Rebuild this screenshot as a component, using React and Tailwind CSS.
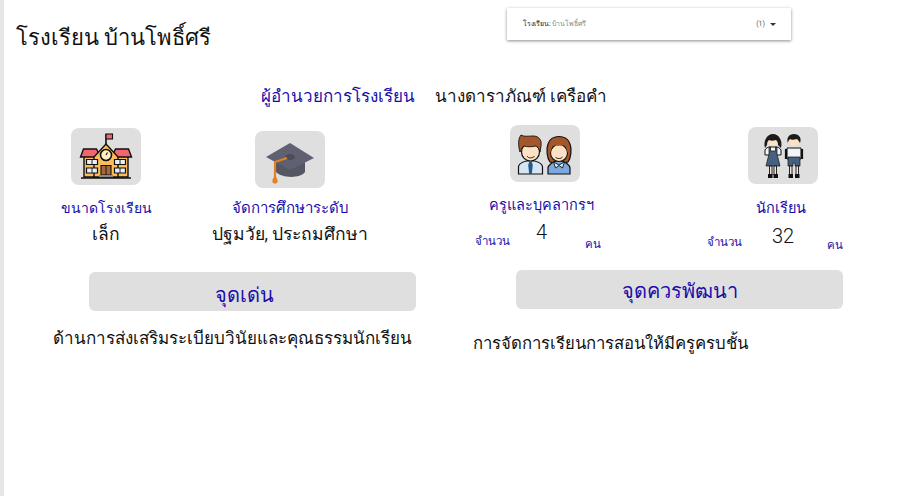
import React from 'react';

const FONT = 'font-["Roboto","Liberation_Sans","Noto_Sans",sans-serif]';

const SchoolIcon = () => (
  <svg width="54" height="50" viewBox="0 0 54 50">
    <path d="M27 13V2" stroke="#111" strokeWidth="1.6" />
    <rect x="27" y="2" width="6.500" height="5" fill="#f0656f" stroke="#111" strokeWidth="1.1" />
    <path d="M5 24h44v21H5z" fill="#fdbd5a" stroke="#111" strokeWidth="1.4" />
    <path d="M1.500 25l3-8h13l4 8zM52.500 25l-3-8h-13l-4 8z" fill="#f0656f" stroke="#111" strokeWidth="1.4" />
    <path d="M15 25L27 12l12 13v20H15z" fill="#fdbd5a" stroke="#111" strokeWidth="1.4" />
    <circle cx="27" cy="23" r="5.500" fill="#fff3c4" stroke="#111" strokeWidth="1.6" />
    <path d="M27 23l1.500-2.500" stroke="#111" strokeWidth="1.100" />
    <path d="M7.500 27.500h11v5h-11zM35.500 27.500h11v5h-11zM7.500 36h11v5h-11zM35.500 36h11v5h-11z" fill="#e6eef8" stroke="#111" strokeWidth="1.200" />
    <path d="M13 27.500v5M41 27.500v5M13 36v5M41 36v5" stroke="#111" strokeWidth="0.9" />
    <path d="M22 33.500h10v9.500H22z" fill="#a5683c" stroke="#111" strokeWidth="1.100" />
    <path d="M27 33.500v9.500" stroke="#111" strokeWidth="0.9" />
    <rect x="20" y="43" width="14" height="2.500" fill="#8a8a8a" />
    <path d="M2 46h50" stroke="#111" strokeWidth="1.500" />
  </svg>
);

const CapIcon = () => (
  <svg width="50" height="50" viewBox="0 0 50 50">
    <path d="M11 23v14c5 6 24 7 29 0V21z" fill="#545663" />
    <path d="M25 8l24 15-24 12L1 22z" fill="#5f6172" />
    <ellipse cx="25" cy="22" rx="5" ry="3" fill="#4a4c58" />
    <path d="M22 23L10 27v17" fill="none" stroke="#e67e22" strokeWidth="2.200" />
    <path d="M10 41c-2 2-3 4-2.500 6 .5 2 4.500 2 5 0 .5-2-.5-4-2.500-6z" fill="#e67e22" />
  </svg>
);

const TeachersIcon = () => (
  <svg width="56" height="42" viewBox="0 0 56 42">
    <path d="M1.500 41v-7c0-3 4-5 8-6h8c4 1 8 3 8 6v7z" fill="#d5e5f6" stroke="#111" strokeWidth="1.200" />
    <path d="M12.200 29h2.600l1 3-1 9h-2.600l-1-9z" fill="#24588f" />
    <circle cx="13.500" cy="19" r="9" fill="#fde1c4" stroke="#111" strokeWidth="1.200" />
    <path d="M3 19C1 12 1 6 4 2c3 2 7 1 12 1 6 0 9 4 8 10l-1 6c-1-3-2-5-4-6-4 1-9 1-12 0-2 1-3 4-4 6z" fill="#a4572a" stroke="#111" strokeWidth="0.9" />
    <path d="M33 29c-3-4-4-13-2-18 3-10 19-10 22 0 2 5 1 14-2 18-5 2-13 2-18 0z" fill="#a4572a" stroke="#111" strokeWidth="1.200" />
    <path d="M31 41v-6c0-3 5-6 8-7h6c3 1 8 4 8 7v6z" fill="#7aa9e0" stroke="#111" strokeWidth="1.200" />
    <circle cx="42" cy="20" r="8.500" fill="#fde1c4" stroke="#111" strokeWidth="1.100" />
    <path d="M33 20c-1-8 3-13 9-13s10 5 9 13c-1-3-2-6-3-8-5 1-9 1-12 0-1 2-2 5-3 8z" fill="#a4572a" />
    <path d="M36.500 29l5.500 3 5.500-3-2 6-3.500-2.500-3.500 2.500z" fill="#e4eefa" stroke="#111" strokeWidth="0.9" />
    <path d="M10 23c1 2.500 6 2.500 7.500 0M38.500 24c1 2 5.500 2 7 0" fill="none" stroke="#111" strokeWidth="0.9" />
  </svg>
);

const StudentsIcon = () => (
  <svg width="42" height="46" viewBox="0 0 42 46">
    <circle cx="11" cy="7" r="5.500" fill="#fde1c4" />
    <path d="M3 15C1 8 5 1 11 1s10 7 8 14l-3-3c0-3-1-4-2-5-3 1-5 1-7 0-1 1-2 2-2 5z" fill="#1b1b1b" />
    <path d="M3 17c1-2 3-3 5-3h6c2 0 4 1 5 3v5H3z" fill="#f3f4f6" stroke="#111" strokeWidth="1" />
    <path d="M7 14v7l-3 12h14l-3-12v-7h-1.500v4h-5v-4z" fill="#46607f" stroke="#111" strokeWidth="0.7" />
    <path d="M7.500 33h2.500v9H7.500zM12 33h2.500v9H12z" fill="#f3e4d8" stroke="#111" strokeWidth="0.9" />
    <rect x="6" y="41" width="4.500" height="4" fill="#111" />
    <rect x="11.500" y="41" width="4.500" height="4" fill="#111" />
    <circle cx="32" cy="7.500" r="5.500" fill="#fde1c4" />
    <path d="M26 10c-2-5 1-9 6-9s8 4 6 9c-1-2-2-3-3-4-3 1-6 1-7 0-1 1-2 2-2 4z" fill="#1b1b1b" />
    <path d="M25 15h14v11H25z" fill="#f3f4f6" stroke="#111" strokeWidth="1" />
    <path d="M24 16v10M40 16v10" stroke="#111" strokeWidth="2.200" />
    <path d="M26 24h12v9h-5v-3h-2v3h-5z" fill="#46607f" stroke="#111" strokeWidth="0.7" />
    <path d="M27.500 33H30v9h-2.500zM34 33h2.500v9H34z" fill="#f3e4d8" stroke="#111" strokeWidth="0.9" />
    <rect x="26.500" y="41" width="4.500" height="4" fill="#111" />
    <rect x="33" y="41" width="4.500" height="4" fill="#111" />
  </svg>
);

const Tile = ({ children, className = '' }) => (
  <div className={`flex h-[57px] w-[70px] items-center justify-center rounded-lg bg-[#dfdfdf] ${className}`}>{children}</div>
);

export default function App() {
  return (
    <div className={`flex h-[496px] w-[910px] flex-col overflow-hidden border-l-[4px] border-[#e6e6e6] bg-white pl-[1px] text-[#111] ${FONT}`}>
      <div className="flex h-[85px] items-start">
        <h1 className="ml-[11px] mt-[21px] w-[491px] text-[22px] leading-[34px]">โรงเรียน บ้านโพธิ์ศรี</h1>
        <div className="mt-[8px] flex h-[32px] w-[284px] items-center justify-between bg-white pl-[16px] pr-[15px] text-[7px] text-[#888] shadow-[0_1px_3px_rgba(0,0,0,0.45)]">
          <span><span className="text-[#222]">โรงเรียน:</span> บ้านโพธิ์ศรี</span>
          <span className="flex items-center gap-[5px] text-[#555]">
            (1)
            <span className="h-0 w-0 border-x-[3px] border-t-[3px] border-x-transparent border-t-[#333]" />
          </span>
        </div>
      </div>

      <div className="flex h-[23px] items-center pl-[256px] text-[17px]">
        <span className="text-[#1a0dab]">ผู้อำนวยการโรงเรียน</span>
        <span className="ml-[20px]">นางดาราภัณฑ์ เครือคำ</span>
      </div>

      <div className="flex">
        <div className="w-[450px]">
          <div className="flex pl-[16px]">
            <div className="mt-[20px] flex w-[170px] flex-col items-center">
              <Tile><SchoolIcon /></Tile>
              <div className="mt-[13px] text-[14px] leading-[20px] text-[#1a0dab]">ขนาดโรงเรียน</div>
              <div className="mt-[4px] text-[17.500px] leading-[24px]">เล็ก</div>
            </div>
            <div className="ml-[14px] mt-[23px] flex w-[170px] flex-col items-center">
              <Tile><CapIcon /></Tile>
              <div className="mt-[10px] text-[15px] leading-[20px] text-[#1a0dab]">จัดการศึกษาระดับ</div>
              <div className="mt-[4px] text-[17.500px] leading-[24px]">ปฐมวัย, ประถมศึกษา</div>
            </div>
          </div>
          <div className="ml-[84px] mt-[26px] flex h-[39px] w-[327px] items-center justify-center rounded-md bg-[#dfdfdf] pr-[16px] pt-[6px] text-[20px] text-[#1a0dab]">จุดเด่น</div>
          <div className="ml-[48px] mt-[14px] text-[17px] leading-[26px]">ด้านการส่งเสริมระเบียบวินัยและคุณธรรมนักเรียน</div>
        </div>

        <div className="w-[450px]">
          <div className="flex">
            <div className="ml-[20px] mt-[17px] flex w-[126px] flex-col">
              <Tile className="ml-[35px]"><TeachersIcon /></Tile>
              <div className="mt-[14px] ml-[14px] text-[14.500px] leading-[20px] text-[#1a0dab]">ครูและบุคลากรฯ</div>
              <div className="mt-[3px] flex items-start">
                <span className="mt-[14px] w-[36px] text-[11.500px] leading-[16px] text-[#1a0dab]">จำนวน</span>
                <span className="ml-[25px] w-[11px] text-[20px] font-light leading-[26px]">4</span>
                <span className="ml-[38px] mt-[17px] text-[11.500px] leading-[16px] text-[#1a0dab]">คน</span>
              </div>
            </div>
            <div className="ml-[106px] mt-[19px] flex w-[136px] flex-col">
              <Tile className="ml-[41px]"><StudentsIcon /></Tile>
              <div className="mt-[15px] ml-[49px] text-[14.500px] leading-[20px] text-[#1a0dab]">นักเรียน</div>
              <div className="mt-[4px] flex items-start">
                <span className="mt-[11px] w-[36px] text-[11.500px] leading-[16px] text-[#1a0dab]">จำนวน</span>
                <span className="ml-[29px] w-[22px] text-[20px] font-light leading-[26px]">32</span>
                <span className="ml-[33px] mt-[14px] text-[11.500px] leading-[16px] text-[#1a0dab]">คน</span>
              </div>
            </div>
          </div>
          <div className="ml-[61px] mt-[17px] flex h-[39px] w-[327px] items-center justify-center rounded-md bg-[#dfdfdf] pt-[3px] text-[20px] text-[#1a0dab]">จุดควรพัฒนา</div>
          <div className="ml-[18px] mt-[22px] text-[16.700px] leading-[26px]">การจัดการเรียนการสอนให้มีครูครบชั้น</div>
        </div>
      </div>
    </div>
  );
}
